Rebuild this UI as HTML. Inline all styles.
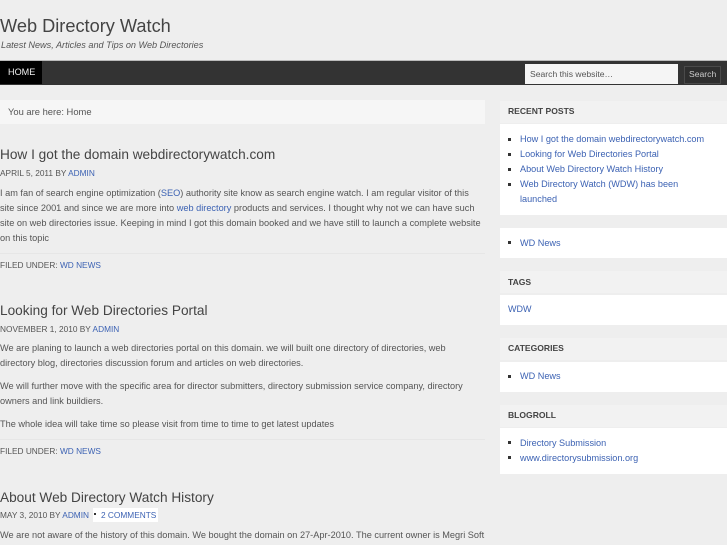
<!DOCTYPE html>
<html><head><meta charset="utf-8"><style>
html,body{margin:0;padding:0;width:727px;height:545px;overflow:hidden;background:#eeeeee}
body{position:relative;font-family:"Liberation Sans",Arial,sans-serif;color:#555}
#p{position:absolute;left:0;top:0;width:727px;height:545px;filter:blur(.3px)}
.t{position:absolute;white-space:nowrap;line-height:14px;font-size:9.2px;color:#555}
.b{position:absolute}
a{color:#3c62b3;text-decoration:none}
h2{position:absolute;margin:0;left:0;font-weight:normal;font-size:13.65px;line-height:18px;color:#444;white-space:nowrap}
.t.m{font-size:8.3px;color:#555}
.w{position:absolute;left:500px;width:227px;background:#fff}
.h{position:absolute;left:500px;width:227px;background:#f2f2f2}
.wt{position:absolute;left:508px;font-size:8.55px;font-weight:bold;color:#444;line-height:12px;white-space:nowrap}
.sq{position:absolute;left:508px;width:3px;height:3px;background:#333}
.l{position:absolute;left:520px;font-size:9.15px;line-height:14px;white-space:nowrap}
</style></head><body><div id="p">
<div class="t" style="left:0;top:14px;font-size:18.2px;line-height:24px;color:#444">Web Directory Watch</div>
<div class="t" style="left:1px;top:38px;font-size:9.15px;font-style:italic;color:#555">Latest News, Articles and Tips on Web Directories</div>

<div class="b" style="left:0;top:60px;width:727px;height:25px;background:#333;border-top:1px solid #bbb;box-sizing:border-box"></div>
<div class="b" style="left:0;top:61px;width:42px;height:23px;background:#000"></div>
<div class="t" style="left:8px;top:65px;font-size:9.1px;color:#eee">HOME</div>
<div class="b" style="left:525px;top:64px;width:153px;height:20px;background:#f5f5f5"></div>
<div class="t" style="left:530px;top:67px;font-size:8.6px;color:#555">Search this website…</div>
<div class="b" style="left:684px;top:66px;width:35px;height:16px;background:#2e2e2e;border:1px solid #4a4a4a"></div>
<div class="t" style="left:689px;top:67px;font-size:8.6px;color:#ccc">Search</div>

<div class="b" style="left:0;top:100px;width:485px;height:24px;background:#f6f6f6"></div>
<div class="t" style="left:8px;top:105px;font-size:9.4px;color:#555">You are here: Home</div>

<h2 style="top:146px">How I got the domain webdirectorywatch.com</h2>
<div class="t m" style="left:0;top:166px">APRIL 5, 2011 BY <a>ADMIN</a></div>
<div class="t" style="left:0;top:186px">I am fan of search engine optimization (<a>SEO</a>) authority site know as search engine watch. I am regular visitor of this</div>
<div class="t" style="left:0;top:201px">site since 2001 and since we are more into <a>web directory</a> products and services. I thought why not we can have such</div>
<div class="t" style="left:0;top:216px">site on web directories issue. Keeping in mind I got this domain booked and we have still to launch a complete website</div>
<div class="t" style="left:0;top:231px">on this topic</div>
<div class="b" style="left:0;top:253px;width:485px;height:1px;background:#e6e6e6"></div>
<div class="t m" style="left:0;top:258px">FILED UNDER: <a>WD NEWS</a></div>

<h2 style="top:302px">Looking for Web Directories Portal</h2>
<div class="t m" style="left:0;top:322px">NOVEMBER 1, 2010 BY <a>ADMIN</a></div>
<div class="t" style="left:0;top:341px">We are planing to launch a web directories portal on this domain. we will built one directory of directories, web</div>
<div class="t" style="left:0;top:356px">directory blog, directories discussion forum and articles on web directories.</div>
<div class="t" style="left:0;top:379px">We will further move with the specific area for director submitters, directory submission service company, directory</div>
<div class="t" style="left:0;top:394px">owners and link buildiers.</div>
<div class="t" style="left:0;top:417px">The whole idea will take time so please visit from time to time to get latest updates</div>
<div class="b" style="left:0;top:439px;width:485px;height:1px;background:#e6e6e6"></div>
<div class="t m" style="left:0;top:444px">FILED UNDER: <a>WD NEWS</a></div>

<h2 style="top:489px">About Web Directory Watch History</h2>
<div class="b" style="left:93px;top:508px;width:65px;height:14px;background:#fff"></div>
<div class="t m" style="left:0;top:508px">MAY 3, 2010 BY <a>ADMIN</a></div>
<div class="b" style="left:94px;top:513px;width:2px;height:2px;background:#333"></div>
<div class="t m" style="left:101px;top:508px"><a>2 COMMENTS</a></div>
<div class="t" style="left:0;top:528px">We are not aware of the history of this domain. We bought the domain on 27-Apr-2010. The current owner is Megri Soft</div>

<!-- Recent posts -->
<div class="h" style="top:101px;height:22px"></div>
<div class="wt" style="top:105px">RECENT POSTS</div>
<div class="w" style="top:124px;height:91px"></div>
<div class="sq" style="top:138px"></div><div class="l" style="top:132px"><a>How I got the domain webdirectorywatch.com</a></div>
<div class="sq" style="top:153px"></div><div class="l" style="top:147px"><a>Looking for Web Directories Portal</a></div>
<div class="sq" style="top:168px"></div><div class="l" style="top:162px"><a>About Web Directory Watch History</a></div>
<div class="sq" style="top:183px"></div><div class="l" style="top:177px"><a>Web Directory Watch (WDW) has been</a></div>
<div class="l" style="top:192px"><a>launched</a></div>

<div class="w" style="top:228px;height:30px"></div>
<div class="sq" style="top:241px"></div><div class="l" style="top:236px"><a>WD News</a></div>

<div class="h" style="top:271px;height:22px"></div>
<div class="wt" style="top:276px">TAGS</div>
<div class="w" style="top:295px;height:30px"></div>
<div class="l" style="left:508px;top:302px;font-size:9px"><a>WDW</a></div>

<div class="h" style="top:338px;height:22px"></div>
<div class="wt" style="top:342px">CATEGORIES</div>
<div class="w" style="top:362px;height:30px"></div>
<div class="sq" style="top:375px"></div><div class="l" style="top:369px"><a>WD News</a></div>

<div class="h" style="top:405px;height:22px"></div>
<div class="wt" style="top:409px">BLOGROLL</div>
<div class="w" style="top:428px;height:46px"></div>
<div class="sq" style="top:441px"></div><div class="l" style="top:436px"><a>Directory Submission</a></div>
<div class="sq" style="top:456px"></div><div class="l" style="top:451px"><a>www.directorysubmission.org</a></div>
</div></body></html>
